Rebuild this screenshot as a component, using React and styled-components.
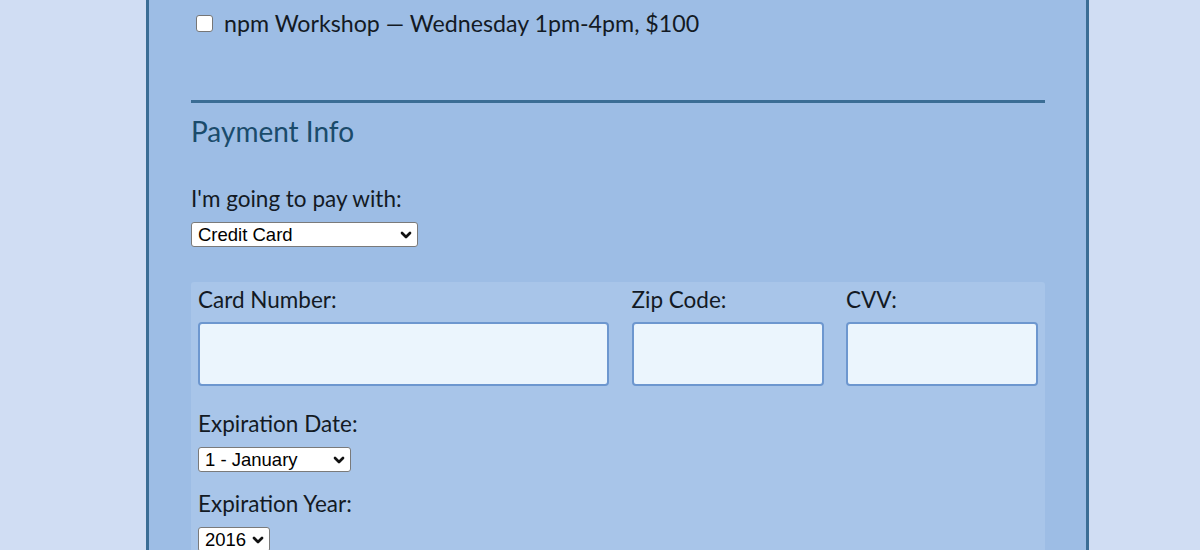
import React from "react";
import styled, { createGlobalStyle } from "styled-components";
import { ChevronDown } from "lucide-react";

const Global = createGlobalStyle`
  html, body { margin: 0; padding: 0; }
  body {
    background: #d0ddf3;
    font-family: Lato, "Noto Sans", sans-serif;
    color: #131a24;
    overflow: hidden;
  }
`;

const Panel = styled.main`
  box-sizing: border-box;
  width: 943px;
  min-height: 560px;
  margin-left: 146px;
  background: #9dbde5;
  border-left: 3px solid #3b6d95;
  border-right: 3px solid #3b6d95;
  padding: 10px 41px 0 42px;
`;

const CheckRow = styled.label`
  display: flex;
  align-items: center;
  gap: 11px;
  font-size: 23.2px;
  line-height: 26px;
  height: 26px;
`;

const Box = styled.input.attrs({ type: "checkbox" })`
  appearance: none;
  width: 17px;
  height: 17px;
  margin: 0 0 0 5px;
  background: #fff;
  border: 1px solid #767676;
  border-radius: 3px;
`;

const Rule = styled.hr`
  border: none;
  height: 3px;
  background: #3b6d95;
  margin: 64px 0 0 0;
`;

const Heading = styled.h2`
  margin: 12px 0 0 0;
  font-size: 28px;
  line-height: 32px;
  font-weight: 400;
  color: #1a4b6b;
`;

const Label = styled.label`
  display: block;
  font-size: 22.5px;
  line-height: 26px;
  margin-top: ${(p) => p.$top || 0}px;
`;

const SelectWrap = styled.div`
  position: relative;
  width: ${(p) => p.$w}px;
  height: 25px;
  margin-top: 10px;
  svg {
    position: absolute;
    right: 4px;
    top: 5px;
    pointer-events: none;
    color: #111;
  }
`;

const Select = styled.select`
  display: block;
  box-sizing: border-box;
  appearance: none;
  width: 100%;
  height: 25px;
  font-family: "Liberation Sans", Arial, sans-serif;
  font-size: 18.5px;
  color: #000;
  background: #fff;
  border: 1px solid #7a7a7a;
  border-radius: 3px;
  padding: 0 20px 0 6px;
  outline: none;
`;

const CardBox = styled.section`
  margin-top: 35px;
  background: #a8c5e9;
  border-radius: 3px;
  padding: 5px 7px 20px 7px;
  min-height: 300px;
`;

const CardGrid = styled.div`
  display: grid;
  grid-template-columns: 411fr 192fr 192fr;
  column-gap: 22.5px;
`;

const Field = styled.div`
  display: flex;
  flex-direction: column;
`;

const TextInput = styled.input`
  box-sizing: border-box;
  width: 100%;
  height: 64px;
  margin-top: 9px;
  background: #ebf5fd;
  border: 2px solid #6d97cf;
  border-radius: 4px;
`;

const months = ["1 - January", "2 - February", "3 - March"];
const years = ["2016", "2017", "2018"];

function Dropdown({ width, children, ...rest }) {
  return (
    <SelectWrap $w={width}>
      <Select {...rest}>{children}</Select>
      <ChevronDown size={16} strokeWidth={4} />
    </SelectWrap>
  );
}

export default function App() {
  return (
    <>
      <Global />
      <Panel>
        <CheckRow>
          <Box />
          npm Workshop — Wednesday 1pm-4pm, $100
        </CheckRow>
        <Rule />
        <Heading>Payment Info</Heading>
        <Label $top={39}>I'm going to pay with:</Label>
        <Dropdown width={227} defaultValue="credit card">
          <option value="credit card">Credit Card</option>
          <option value="paypal">PayPal</option>
          <option value="bitcoin">Bitcoin</option>
        </Dropdown>
        <CardBox>
          <CardGrid>
            <Field>
              <Label>Card Number:</Label>
              <TextInput type="text" />
            </Field>
            <Field>
              <Label>Zip Code:</Label>
              <TextInput type="text" />
            </Field>
            <Field>
              <Label>CVV:</Label>
              <TextInput type="text" />
            </Field>
          </CardGrid>
          <Label $top={25}>Expiration Date:</Label>
          <Dropdown width={153}>
            {months.map((m) => (
              <option key={m}>{m}</option>
            ))}
          </Dropdown>
          <Label $top={19}>Expiration Year:</Label>
          <Dropdown width={72}>
            {years.map((y) => (
              <option key={y}>{y}</option>
            ))}
          </Dropdown>
        </CardBox>
      </Panel>
    </>
  );
}
